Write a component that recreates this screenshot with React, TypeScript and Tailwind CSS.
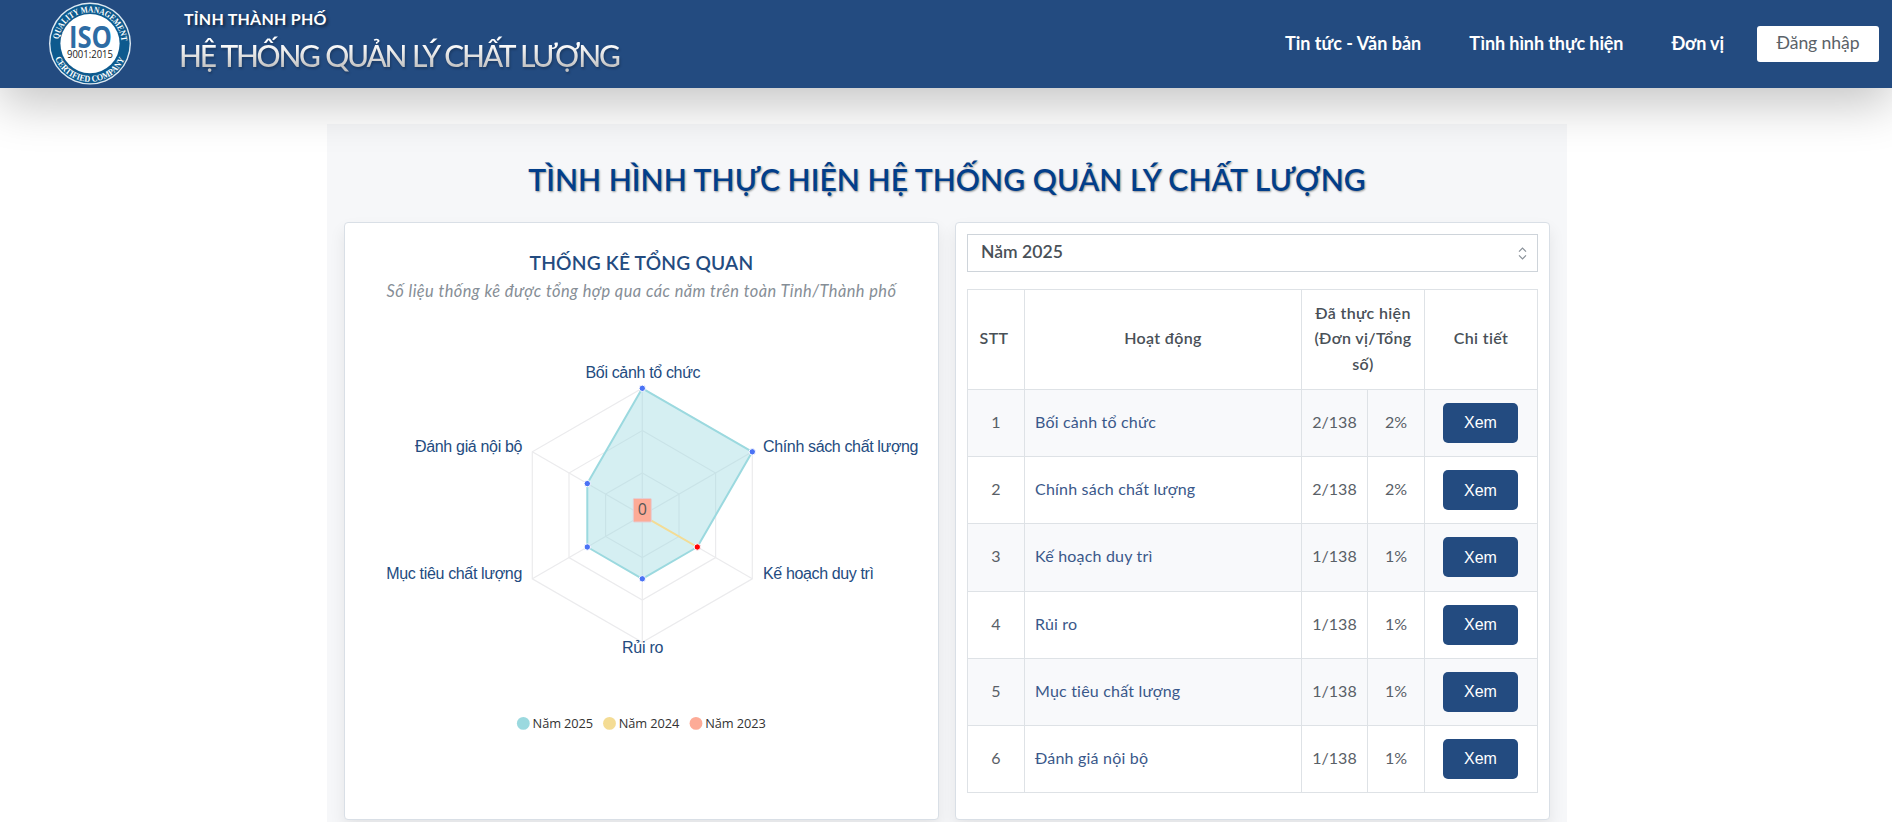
type Activity = { name: string; done: string; percent: string };

const activities: Activity[] = [
  { name: "Bối cảnh tổ chức", done: "2/138", percent: "2%" },
  { name: "Chính sách chất lượng", done: "2/138", percent: "2%" },
  { name: "Kế hoạch duy trì", done: "1/138", percent: "1%" },
  { name: "Rủi ro", done: "1/138", percent: "1%" },
  { name: "Mục tiêu chất lượng", done: "1/138", percent: "1%" },
  { name: "Đánh giá nội bộ", done: "1/138", percent: "1%" },
];

function IsoLogo() {
  return (
    <svg viewBox="0 0 84 84" className="h-[84px] w-[84px]">
      <defs>
        <path id="arcTop" d="M 10.6 38.4 A 31.6 31.6 0 0 1 73.4 38.4" />
        <path id="arcBottom" d="M 6 53.5 A 37.8 37.8 0 0 0 78 53.5" />
      </defs>
      <circle cx="42" cy="41.6" r="41" fill="#dfeaf2" />
      <circle cx="42" cy="41.6" r="39.6" fill="#0d5a8e" />
      <circle cx="42" cy="41.6" r="29.6" fill="#ffffff" />
      <g fill="#ffffff" fontFamily="Liberation Serif, serif" fontWeight="700" fontSize="9">
        <text textLength="92" lengthAdjust="spacingAndGlyphs">
          <textPath href="#arcTop" startOffset="1">QUALITY MANAGEMENT</textPath>
        </text>
        <text textLength="88" lengthAdjust="spacingAndGlyphs">
          <textPath href="#arcBottom" startOffset="3">CERTIFIED COMPANY</textPath>
        </text>
      </g>
      <text x="42.5" y="45.8" textAnchor="middle" textLength="43" lengthAdjust="spacingAndGlyphs" fontFamily="Open Sans, sans-serif" fontWeight="700" fontSize="29.5" fill="#2d6ca4">ISO</text>
      <text x="42" y="55.6" textAnchor="middle" textLength="46" lengthAdjust="spacingAndGlyphs" fontFamily="Open Sans, sans-serif" fontSize="11" fill="#222222">9001:2015</text>
    </svg>
  );
}

function Header() {
  return (
    <header className="relative z-10 flex h-[88px] shrink-0 items-center bg-[#234b80] pr-[13px] pl-12 text-white shadow-[0_16px_48px_rgba(0,0,0,0.23)]">
      <IsoLogo />
      <div className="ml-[47px] flex h-full flex-col">
        <div className="mt-2 pl-[5px] text-[16px] leading-[22px] font-bold tracking-[0.25px] [text-shadow:2px_2px_3px_rgba(0,0,0,0.5)]">
          TỈNH THÀNH PHỐ
        </div>
        <div className="bg-linear-to-b from-white from-30% to-[#c4c4c4] to-80% bg-clip-text pt-1 pr-1 text-[30px] leading-[42px] font-medium tracking-[-2.3px] text-transparent drop-shadow-[1px_2px_1px_rgba(0,0,0,0.22)] [word-spacing:1.4px]">
          HỆ THỐNG QUẢN LÝ CHẤT LƯỢNG
        </div>
      </div>
      <nav className="ml-auto flex items-center text-[18px] leading-6 font-bold">
        <a className="pb-0.5">Tin tức - Văn bản</a>
        <a className="ml-12 pb-0.5 tracking-[-0.1px]">Tình hình thực hiện</a>
        <a className="ml-12 pb-0.5 tracking-[-0.1px]">Đơn vị</a>
        <button className="ml-[33px] h-9 w-[122px] rounded-[3px] bg-white pb-0.5 text-[17.6px] font-normal tracking-[-0.1px] text-[#5a6268]">Đăng nhập</button>
      </nav>
    </header>
  );
}

const CX = 642.3;
const CY = 515.3;
const R = 127;

function ring(values: number[]) {
  return values
    .map((v, i) => {
      const a = (Math.PI / 3) * i;
      return `${(CX + R * v * Math.sin(a)).toFixed(1)},${(CY - R * v * Math.cos(a)).toFixed(1)}`;
    })
    .join(" ");
}

const axisLabels = [
  { text: "Bối cảnh tổ chức", x: 585.5, y: 378, w: 115 },
  { text: "Chính sách chất lượng", x: 763, y: 452, w: 155.5 },
  { text: "Kế hoạch duy trì", x: 763, y: 579, w: 111 },
  { text: "Rủi ro", x: 622, y: 652.5, w: 41.5 },
  { text: "Mục tiêu chất lượng", x: 386.3, y: 579, w: 136 },
  { text: "Đánh giá nội bộ", x: 415, y: 452, w: 107.5 },
];

const legend = [
  { text: "Năm 2025", color: "#9bd9df", x: 523.3 },
  { text: "Năm 2024", color: "#f4dc94", x: 609.5 },
  { text: "Năm 2023", color: "#fdab97", x: 696 },
];

function RadarChart() {
  const year2025 = ring([1, 1, 0.5, 0.5, 0.5, 0.5]);
  const corners = ring([1, 1, 1, 1, 1, 1]).split(" ");
  const [hx, hy] = year2025.split(" ")[2].split(",");
  return (
    <svg viewBox="345 308 593 490" className="h-[490px] w-full">
      <g stroke="#ebebed" strokeWidth="1.2" fill="none">
        {[1 / 3, 2 / 3, 1].map((s) => (
          <polygon key={s} points={ring([s, s, s, s, s, s])} />
        ))}
        {corners.map((c) => (
          <line key={c} x1={CX} y1={CY} x2={c.split(",")[0]} y2={c.split(",")[1]} />
        ))}
      </g>
      <polygon points={year2025} fill="#9bd9df" fillOpacity="0.42" stroke="#9bd9df" strokeWidth="2" strokeLinejoin="round" />
      {year2025.split(" ").map((p) => (
        <circle key={p} cx={p.split(",")[0]} cy={p.split(",")[1]} r="3.2" fill="#4a72f5" stroke="#ffffff" strokeWidth="1" />
      ))}
      <line x1={CX} y1={CY} x2={hx} y2={hy} stroke="#f4dc94" strokeWidth="2" />
      <circle cx={hx} cy={hy} r="3.2" fill="#ff0000" stroke="#ffffff" strokeWidth="1" />
      <rect x="633.3" y="498.5" width="18" height="23.5" rx="1" fill="#fdab97" stroke="#e3cfd6" strokeWidth="1" />
      <text x="642.3" y="515" textAnchor="middle" fontFamily="Open Sans, sans-serif" fontSize="16" fill="#555555">0</text>
      <g fontFamily="Liberation Sans, Arial, sans-serif" fontSize="16" fill="#234b80">
        {axisLabels.map((l) => (
          <text key={l.text} x={l.x} y={l.y} textLength={l.w}>{l.text}</text>
        ))}
      </g>
      {legend.map((l) => (
        <g key={l.text}>
          <circle cx={l.x} cy="723.4" r="6.4" fill={l.color} />
          <text x={l.x + 9.3} y="728" textLength="60.5" fontFamily="Open Sans, sans-serif" fontSize="12.8" fill="#333333">{l.text}</text>
        </g>
      ))}
    </svg>
  );
}

function YearSelect() {
  return (
    <div className="flex h-[38px] items-center justify-between border border-[#ced4da] pr-[10px] pl-[13px] text-[17.6px] font-semibold text-[#495057]">
      <span className="pb-px">Năm 2025</span>
      <svg viewBox="0 0 9 13" className="h-[13px] w-[9px] fill-none stroke-[#8a9199] stroke-[1.2]">
        <path d="M1 4.6 L4.5 1.1 L8 4.6 M1 8.4 L4.5 11.9 L8 8.4" />
      </svg>
    </div>
  );
}

function ActivityTable() {
  return (
    <table className="mt-[17px] w-[571px] table-fixed border-collapse text-center text-[16px] leading-[25.2px] text-[#495057] [&_td]:border [&_td]:border-[#dee2e6] [&_th]:border [&_th]:border-[#dee2e6]">
      <colgroup>
        <col className="w-[57px]" />
        <col className="w-[277px]" />
        <col className="w-[66px]" />
        <col className="w-[57px]" />
        <col />
      </colgroup>
      <thead className="font-semibold tracking-[0.35px]">
        <tr className="h-[100px]">
          <th className="pr-1 pb-[3px] font-semibold">STT</th>
          <th className="pb-[3px] font-semibold">Hoạt động</th>
          <th colSpan={2} className="px-3 pb-[3px] font-semibold">Đã thực hiện (Đơn vị/Tổng số)</th>
          <th className="pb-[3px] font-semibold">Chi tiết</th>
        </tr>
      </thead>
      <tbody className="text-[#596067]">
        {activities.map((a, i) => (
          <tr key={a.name} className="h-[67.2px] odd:bg-[#f8f9fb]">
            <td className="pb-[3px]">{i + 1}</td>
            <td className="pb-[3px] pl-[10px] text-left tracking-[0.2px] text-[#3a588a]">{a.name}</td>
            <td className="pb-[3px]">{a.done}</td>
            <td className="pb-[3px]">{a.percent}</td>
            <td className="pr-px">
              <button className="mx-auto block h-[40px] w-[75px] rounded-[5px] bg-[#234b80] font-['Liberation_Sans'] text-[16px] text-white">Xem</button>
            </td>
          </tr>
        ))}
      </tbody>
    </table>
  );
}

export default function App() {
  return (
    <div className="flex h-[822px] w-[1892px] flex-col overflow-hidden bg-white font-['Lato','Open_Sans',sans-serif]">
      <Header />
      <main className="mt-9 ml-[327px] h-[720px] w-[1240px] shrink-0 bg-[#f6f7f9] px-[17px] pt-[34px]">
        <h1 className="text-center text-[30px] leading-[42px] font-semibold tracking-[0.1px] text-[#023e8a] [text-shadow:1px_1px_2px_rgba(0,0,0,0.4)]">
          TÌNH HÌNH THỰC HIỆN HỆ THỐNG QUẢN LÝ CHẤT LƯỢNG
        </h1>
        <div className="mt-[22px] grid grid-cols-2 gap-4">
          <section className="h-[598px] rounded-[4px] border border-[#d9dfe6] bg-white pt-[26px] text-center shadow-[0_8px_16px_rgba(0,0,0,0.08)]">
            <h2 className="text-[19.2px] leading-7 font-semibold tracking-[0.2px] text-[#234b80]">THỐNG KÊ TỔNG QUAN</h2>
            <p className="text-[16.4px] leading-7 tracking-[0.44px] text-[#868e96] italic">
              Số liệu thống kê được tổng hợp qua các năm trên toàn Tỉnh/Thành phố
            </p>
            <div className="mt-[3px]">
              <RadarChart />
            </div>
          </section>
          <section className="h-[598px] rounded-[4px] border border-[#d9dfe6] bg-white px-[11px] pt-[11px] shadow-[0_8px_16px_rgba(0,0,0,0.08)]">
            <YearSelect />
            <ActivityTable />
          </section>
        </div>
      </main>
    </div>
  );
}
